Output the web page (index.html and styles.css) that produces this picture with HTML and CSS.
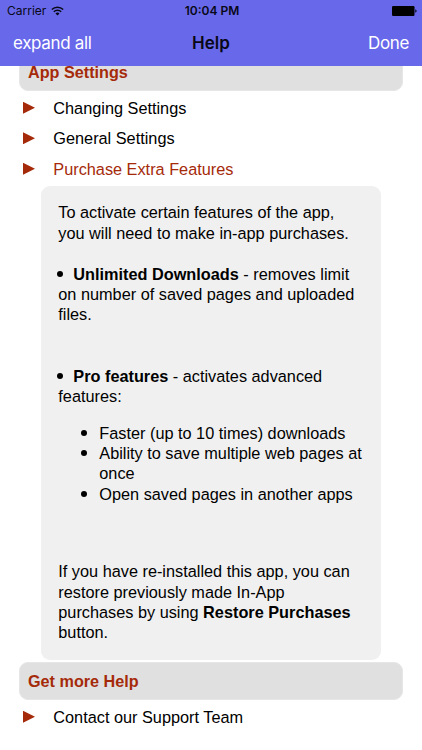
FILE: index.html
```html
<!DOCTYPE html>
<html lang="en">
<head>
  <meta charset="UTF-8" />
  <meta name="viewport" content="width=device-width, initial-scale=1.0"/>
  <title>Help</title>
  <link rel="stylesheet" href="styles.css">
</head>
<body>
  <header>
    <div class="status-bar">
      <div class="carrier">
        <span>Carrier</span>
        <svg class="wifi" viewBox="0 0 13 10">
          <path d="M.8 3.5a8.2 8.2 0 0 1 11.4 0M2.8 5.7a5.3 5.3 0 0 1 7.4 0" fill="none" stroke="#080816" stroke-width="1.5"/>
          <path d="M4.5 7.5a2.9 2.9 0 0 1 4 0l-2 2.1z" fill="#080816"/>
        </svg>
      </div>
      <span class="time">10:04 PM</span>
      <svg class="battery" viewBox="0 0 25 10">
        <rect width="22.5" height="10" rx="1.2"/>
        <path d="M23.3 3.2q1.3.5 1.3 1.8t-1.3 1.8z"/>
      </svg>
    </div>
    <nav class="nav-bar">
      <a class="expand">expand all</a>
      <h1>Help</h1>
      <a class="done">Done</a>
    </nav>
  </header>

  <main>
    <h2 class="first">App Settings</h2>
    <div class="topic">Changing Settings</div>
    <div class="topic">General Settings</div>
    <div class="topic open">Purchase Extra Features</div>

    <div class="answer">
      <p>To activate certain features of the app, you will need to make in-app purchases.</p>
      <p class="feature"><b>Unlimited Downloads</b> - removes limit on number of saved pages and uploaded files.</p>
      <p class="feature pro"><b>Pro features</b> - activates advanced features:</p>
      <ul>
        <li>Faster (up to 10 times) downloads</li>
        <li>Ability to save multiple web pages at once</li>
        <li>Open saved pages in another apps</li>
      </ul>
      <p>If you have re-installed this app, you can restore previously made In-App purchases by using <b>Restore Purchases</b> button.</p>
    </div>

    <h2>Get more Help</h2>
    <div class="topic">Contact our Support Team</div>
  </main>
</body>
</html>
```

FILE: styles.css
```css
html, body {
  height: 100%;
  margin: 0;
  padding: 0;
}

body {
  display: flex;
  flex-direction: column;
  overflow: hidden;
  background-color: #fff;
  color: #000;
  font-family: "Liberation Sans", Arial, sans-serif;
  font-size: 16.3px;
  line-height: 20.4px;
}

header {
  flex: none;
  height: 65.5px;
  background-color: #6868eb;
  color: #080816;
  font-family: Inter, sans-serif;
}

.status-bar, .nav-bar {
  display: grid;
  grid-template-columns: 1fr auto 1fr;
  align-items: center;
}

.status-bar {
  height: 22px;
  padding: 0 5px 0 7px;
  font-size: 12px;
  line-height: 22px;
}

.carrier {
  display: flex;
  align-items: center;
  gap: 5px;
}

.wifi {
  width: 13px;
  height: 10px;
}

.time {
  font-weight: 600;
}

.battery {
  width: 25px;
  height: 10px;
  justify-self: end;
  fill: #000;
}

.nav-bar {
  height: 43px;
  padding: 0 13px;
  font-size: 17px;
}

.nav-bar a {
  color: #fff;
  letter-spacing: -0.35px;
}

.nav-bar h1 {
  margin: 0;
  font-size: 17px;
  font-weight: 600;
}

.done {
  text-align: right;
}

main {
  flex: 1;
  min-height: 0;
  overflow: hidden;
  padding: 0 19px;
}

h2 {
  box-sizing: border-box;
  height: 38px;
  margin: 2.5px 0 1.5px;
  padding: 0 8px;
  border: 1px solid #e6e6e6;
  border-radius: 9px;
  background-color: #e0e0e0;
  color: #a52a0a;
  font-size: 16.2px;
  line-height: 36px;
}

h2.first {
  margin-top: -12.5px;
}

.topic {
  display: flex;
  align-items: center;
  height: 30.5px;
  padding-left: 4px;
}

.topic::before {
  content: "";
  width: 12px;
  height: 12px;
  margin-right: 18.3px;
  background-color: #a52a0a;
  clip-path: polygon(0 0, 100% 50%, 0 100%);
}

.open {
  color: #a52a0a;
}

.answer {
  box-sizing: border-box;
  width: 340px;
  height: 474px;
  margin: 1.5px 0 0 22px;
  padding: 16.8px 18px 0 17.3px;
  border-radius: 9px;
  background-color: #f0f0f0;
}

.answer p {
  margin: 0 0 20.4px;
}

.answer .feature::before {
  content: "";
  display: inline-block;
  width: 6px;
  height: 6px;
  margin: 0 10px 3px -1px;
  border-radius: 50%;
  background-color: #000;
}

.answer .pro {
  margin: 40.8px 0 16.3px;
}

.answer ul {
  margin: 0 0 57px;
  padding-left: 41px;
  list-style: none;
}

.answer li::before {
  content: "";
  float: left;
  width: 6px;
  height: 6px;
  margin: 7px 0 0 -18px;
  border-radius: 50%;
  background-color: #000;
}
```
